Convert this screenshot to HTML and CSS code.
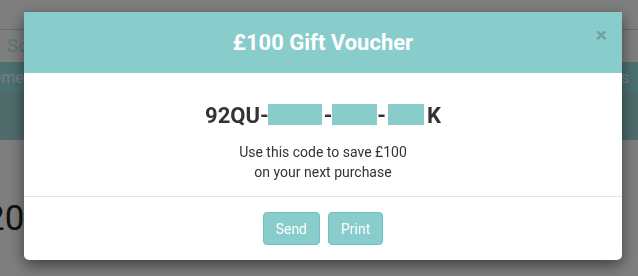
FILE: index.html
```html
<!DOCTYPE html>
<html>
<head>
<meta charset="utf-8">
<link rel="stylesheet" href="styles.css">
</head>
<body>
<div class="page">
  <div class="topbar"></div>
  <div class="search">Scan voucher</div>
  <div class="nav"><span>Statements</span><span>Settings</span></div>
  <div class="band"></div>
  <div class="content"><h2 class="year">2020</h2></div>
</div>
<div class="backdrop"></div>
<div class="modal">
  <div class="modal-header">
    <h4 class="modal-title">£100 Gift Voucher</h4>
    <span class="close">×</span>
  </div>
  <div class="modal-body">
    <div class="code">92QU-<span class="mask m1"></span>-<span class="mask m2"></span>-<span class="mask m3"></span>K</div>
    <p class="note">Use this code to save £100<br>on your next purchase</p>
  </div>
  <div class="modal-footer">
    <button class="btn">Send</button>
    <button class="btn">Print</button>
  </div>
</div>
</body>
</html>
```
FILE: styles.css
```css
html, body {
  margin: 0;
  padding: 0;
  height: 100%;
  overflow: hidden;
  font-family: Roboto, "Liberation Sans", sans-serif;
  background: #fff;
}
.page {
  display: flex;
  flex-direction: column;
}
.topbar {
  height: 29px;
  background: #fff;
}
.search {
  height: 32px;
  border-top: 1px solid #d6d6d6;
  padding-left: 7px;
  font-size: 19px;
  line-height: 32px;
  color: #b8eeee;
}
.nav {
  height: 31px;
  background: #96e2e2;
  display: flex;
  justify-content: space-between;
  font-size: 16px;
  line-height: 31px;
  color: #f0ffff;
}
.nav span:first-child { margin-left: -36px; }
.nav span:last-child { margin-right: 9px; }
.band {
  height: 47px;
  background: #a0d6d6;
}
.content {
  padding-top: 59px;
}
.year {
  margin: 0 0 0 -15px;
  font-size: 35px;
  font-weight: 400;
  line-height: 40px;
  color: #222;
}
.backdrop {
  position: fixed;
  inset: 0;
  background: rgba(0, 0, 0, 0.5);
}
.modal {
  position: absolute;
  left: 24px;
  top: 12px;
  width: 598px;
  background: #fff;
  border-radius: 0 0 5px 5px;
  box-shadow: 0 5px 15px rgba(0, 0, 0, 0.5);
  text-align: center;
}
.modal-header {
  position: relative;
  height: 61px;
  background: #88cccc;
  display: flex;
  align-items: center;
  justify-content: center;
}
.modal-title {
  margin: 0;
  font-size: 22px;
  font-weight: 700;
  color: #fff;
}
.close {
  position: absolute;
  right: 15px;
  top: 13px;
  font-size: 21px;
  font-weight: 700;
  line-height: 1;
  color: #000;
  opacity: 0.2;
}
.modal-body {
  padding: 28px 15px 14px;
}
.code {
  font-size: 22px;
  font-weight: 700;
  line-height: 30px;
  color: #333;
}
.mask {
  display: inline-block;
  height: 21px;
  vertical-align: -2px;
  background: #88cccc;
}
.m1 { width: 54px; margin-left: -1px; margin-right: 2px; }
.m2 { width: 45px; }
.m3 { width: 36px; margin-left: 2px; margin-right: 3px; }
.note {
  margin: 11px 0 0;
  font-size: 14px;
  line-height: 20px;
  color: #333;
}
.modal-footer {
  border-top: 1px solid #e5e5e5;
  padding: 15px;
  display: flex;
  justify-content: center;
  gap: 8px;
}
.btn {
  height: 33px;
  padding: 0 12px;
  border: 1px solid #6fc0c0;
  border-radius: 4px;
  background: #88cccc;
  color: #fff;
  font-family: Roboto, "Liberation Sans", sans-serif;
  font-size: 14px;
}
```
